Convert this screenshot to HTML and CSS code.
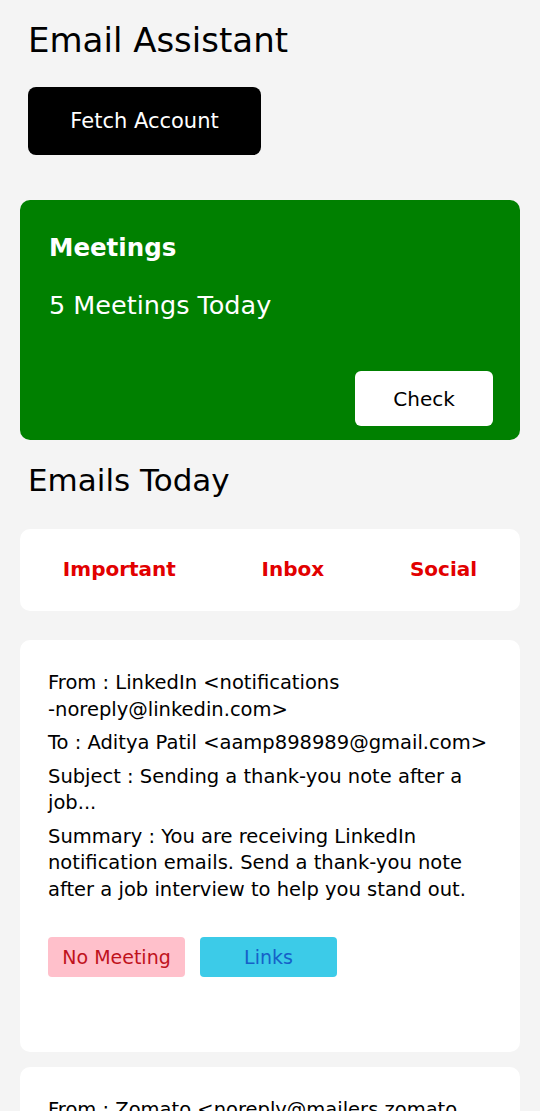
FILE: index.html
```html
<!DOCTYPE html>
<html>
<head>
<meta charset="utf-8">
<link rel="stylesheet" href="styles.css">
</head>
<body>
<div class="page">
  <h1 class="title">Email Assistant</h1>
  <button class="fetch-btn">Fetch Account</button>

  <div class="meet-card">
    <div class="meet-title">Meetings</div>
    <div class="meet-count">5 Meetings Today</div>
    <div class="spacer"></div>
    <button class="check-btn">Check</button>
  </div>

  <h2 class="section-title">Emails Today</h2>

  <div class="tabs">
    <span class="tab">Important</span>
    <span class="tab">Inbox</span>
    <span class="tab">Social</span>
  </div>

  <div class="email-card">
    <p class="line">From : LinkedIn &lt;notifications<br>-noreply@linkedin.com&gt;</p>
    <p class="line">To : Aditya Patil &lt;aamp898989@gmail.com&gt;</p>
    <p class="line">Subject : Sending a thank-you note after a<br>job...</p>
    <p class="line">Summary : You are receiving LinkedIn<br>notification emails. Send a thank-you note<br>after a job interview to help you stand out.</p>
    <div class="badges">
      <span class="badge badge-pink">No Meeting</span>
      <span class="badge badge-blue">Links</span>
    </div>
  </div>

  <div class="email-card">
    <p class="line">From : Zomato &lt;noreply@mailers.zomato<br>.com&gt;</p>
  </div>
</div>
</body>
</html>
```

FILE: styles.css
```css
* { box-sizing: border-box; }
html, body {
  margin: 0;
  padding: 0;
  background: #f4f4f4;
  font-family: "DejaVu Sans", Inter, sans-serif;
  color: #000;
}
.page {
  padding: 0 20px 40px 20px;
}
.title {
  margin: 0 0 0 8px;
  padding-top: 20px;
  font-size: 34px;
  line-height: 40px;
  font-weight: 400;
}
.fetch-btn {
  display: block;
  margin: 27px 0 0 8px;
  width: 233px;
  height: 68px;
  border: none;
  border-radius: 8px;
  background: #000;
  color: #fff;
  font-family: inherit;
  font-size: 21px;
  font-weight: 400;
}
.meet-card {
  margin-top: 45px;
  height: 240px;
  background: #008000;
  border-radius: 10px;
  padding: 28px 27px 14px 29px;
  display: flex;
  flex-direction: column;
  color: #fff;
}
.meet-title {
  font-size: 24.5px;
  line-height: 40px;
  font-weight: 700;
}
.meet-count {
  margin-top: 19px;
  font-size: 25.5px;
  line-height: 36px;
}
.spacer { flex: 1; }
.check-btn {
  align-self: flex-end;
  width: 138px;
  height: 55px;
  border: none;
  border-radius: 6px;
  background: #fff;
  color: #000;
  font-family: inherit;
  font-size: 20px;
  font-weight: 400;
}
.section-title {
  margin: 20px 0 0 8px;
  font-size: 31px;
  line-height: 40px;
  font-weight: 400;
}
.tabs {
  margin-top: 29px;
  height: 82px;
  background: #fff;
  border-radius: 10px;
  display: flex;
  align-items: center;
  justify-content: space-around;
  padding-bottom: 3px;
}
.tab {
  color: #e20000;
  font-size: 20px;
  font-weight: 700;
}
.email-card {
  margin-top: 29px;
  background: #fff;
  border-radius: 10px;
  padding: 30px 28px 75px 28px;
}
.email-card + .email-card {
  margin-top: 15px;
}
.line {
  margin: 0 0 7px 0;
  font-size: 19.5px;
  line-height: 26.5px;
  white-space: nowrap;
}
.badges {
  margin-top: 34px;
  display: flex;
  gap: 15px;
}
.badge {
  width: 137px;
  height: 40px;
  border-radius: 4px;
  display: flex;
  align-items: center;
  justify-content: center;
  font-size: 19px;
}
.badge-pink {
  background: #ffc0cb;
  color: #c0121c;
}
.badge-blue {
  background: #3ccbe8;
  color: #1560c8;
}
```
